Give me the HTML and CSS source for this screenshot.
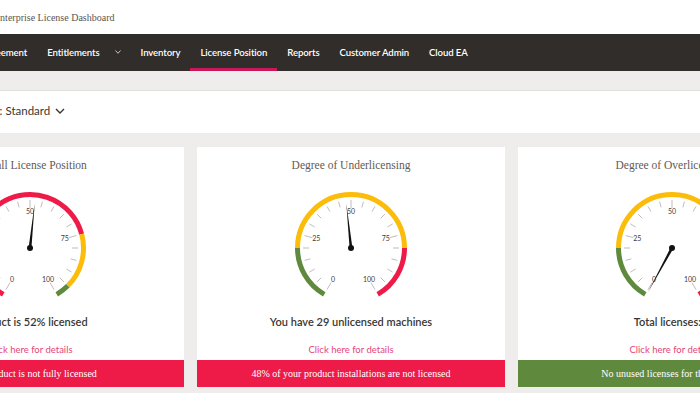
FILE: index.html
```html
<!DOCTYPE html>
<html lang="en">
<head>
  <meta charset="UTF-8" />
  <meta name="viewport" content="width=device-width, initial-scale=1.0" />
  <title>Enterprise License Dashboard</title>
  <link rel="stylesheet" href="styles.css">
</head>
<body>
  <div class="page">
    <header class="top">
      <span class="app-title">Enterprise License Dashboard</span>
    </header>

    <nav class="nav">
      <a>Agreement</a>
      <a>Entitlements
        <svg class="caret" width="6" height="4" viewBox="0 0 6 4"><polyline points="0.5,0.5 3,3.3 5.5,0.5" /></svg>
      </a>
      <a>Inventory</a>
      <a class="active">License Position</a>
      <a>Reports</a>
      <a>Customer Admin</a>
      <a>Cloud EA</a>
    </nav>

    <div class="filter">
      <span>Edition: Standard</span>
      <svg class="chevron" width="10" height="6" viewBox="0 0 10 6"><polyline points="1,1 5,5 9,1" /></svg>
    </div>

    <div class="cards">
      <div class="card">
        <h2>Overall License Position</h2>
        <svg class="gauge" viewBox="0 0 130 115" data-value="52" data-len="45" data-bands="0:75:red,75:95:yellow,95:100:green"></svg>
        <p class="summary">Product is 52% licensed</p>
        <a class="details">Click here for details</a>
        <div class="status bad">Your product is not fully licensed</div>
      </div>

      <div class="card">
        <h2>Degree of Underlicensing</h2>
        <svg class="gauge" viewBox="0 0 130 115" data-value="48" data-len="45" data-bands="0:20:green,20:80:yellow,80:100:red"></svg>
        <p class="summary">You have 29 unlicensed machines</p>
        <a class="details">Click here for details</a>
        <div class="status bad">48% of your product installations are not licensed</div>
      </div>

      <div class="card">
        <h2>Degree of Overlicensing</h2>
        <svg class="gauge" viewBox="0 0 130 115" data-value="-0.5" data-len="51" data-bands="0:20:green,20:80:yellow,80:100:red"></svg>
        <p class="summary">Total licenses: 0</p>
        <a class="details">Click here for details</a>
        <div class="status good">No unused licenses for this product</div>
      </div>
    </div>
  </div>

  <script>
    const NS = 'http://www.w3.org/2000/svg';
    const colors = { red: '#ee1a48', yellow: '#fcbc0a', green: '#5f8a3d' };
    const cx = 65, cy = 63;

    function pt(v, r) {
      const a = (-150 + v * 3) * Math.PI / 180;
      return [cx + r * Math.sin(a), cy - r * Math.cos(a)];
    }

    function el(tag, attrs) {
      const node = document.createElementNS(NS, tag);
      for (const k in attrs) node.setAttribute(k, attrs[k]);
      return node;
    }

    document.querySelectorAll('.gauge').forEach(svg => {
      // coloured bands round the dial
      svg.dataset.bands.split(',').forEach(band => {
        const [from, to, c] = band.split(':');
        const [x0, y0] = pt(+from, 53.5);
        const [x1, y1] = pt(+to, 53.5);
        const large = (to - from) * 3 > 180 ? 1 : 0;
        svg.appendChild(el('path', {
          d: `M${x0} ${y0} A53.5 53.5 0 ${large} 1 ${x1} ${y1}`,
          stroke: colors[c], 'stroke-width': 5, fill: 'none'
        }));
      });

      // ticks every 5
      for (let v = 0; v <= 100; v += 5) {
        const major = v % 25 === 0;
        const [x0, y0] = pt(v, major ? 40 : 42);
        const [x1, y1] = pt(v, 48);
        svg.appendChild(el('line', { x1: x0, y1: y0, x2: x1, y2: y1, stroke: '#b9b6b3', 'stroke-width': 0.9 }));
      }

      [0, 25, 50, 75, 100].forEach(v => {
        const [x, y] = pt(v, 36);
        const t = el('text', { x: x, y: y + 2.4, 'text-anchor': 'middle', class: 'tick-label' });
        t.textContent = v;
        svg.appendChild(t);
      });

      // needle
      const value = +svg.dataset.value;
      const len = +svg.dataset.len;
      const a = (-150 + value * 3) * Math.PI / 180;
      const [tx, ty] = pt(value, len);
      const w = 1.4;
      svg.appendChild(el('polygon', {
        points: `${cx + w * Math.cos(a)},${cy + w * Math.sin(a)} ${tx},${ty} ${cx - w * Math.cos(a)},${cy - w * Math.sin(a)}`,
        fill: '#111'
      }));
      svg.appendChild(el('circle', { cx: cx, cy: cy, r: 3, fill: '#111' }));
    });
  </script>
</body>
</html>
```

FILE: styles.css
```css
* {
  box-sizing: border-box;
  margin: 0;
  padding: 0;
}

body {
  background: #efedeb;
  font-family: 'Lato', sans-serif;
  color: #312d2a;
  overflow: hidden;
}

.page {
  width: 976px;
  margin-left: -137px;
}

.top {
  height: 34px;
  background: #fff;
  display: flex;
  align-items: center;
  padding-left: 131px;
}

.app-title {
  font-family: 'Liberation Serif', serif;
  font-size: 10px;
  color: #5a5550;
}

.nav {
  height: 37px;
  background: #312d2a;
  display: flex;
  padding-left: 108px;
}

.nav a {
  display: flex;
  align-items: center;
  gap: 15px;
  padding: 0 10px;
  color: #fff;
  font-weight: 600;
  font-size: 9.6px;
  letter-spacing: -0.1px;
  border-top: 2px solid transparent;
  border-bottom: 3px solid transparent;
}

.nav a.active {
  border-bottom-color: #c9175a;
}

.caret polyline {
  fill: none;
  stroke: #d8d5d2;
  stroke-width: 0.9;
}

.filter {
  margin-top: 19px;
  height: 43px;
  background: #fff;
  border-top: 1px solid #e2e0dd;
  display: flex;
  align-items: center;
  gap: 5px;
  padding-left: 101px;
  padding-bottom: 3px;
  font-size: 11.5px;
  color: #3a3631;
}

.chevron polyline {
  fill: none;
  stroke: #3a3631;
  stroke-width: 1.4;
}

.cards {
  display: flex;
  gap: 13px;
  padding: 14px 13px;
}

.card {
  width: 308px;
  height: 240px;
  background: #fff;
  display: flex;
  flex-direction: column;
  align-items: center;
  padding-top: 11px;
}

.card h2 {
  font-family: 'Liberation Serif', serif;
  font-weight: normal;
  font-size: 11.5px;
  line-height: 14px;
  color: #5f5a55;
}

.gauge {
  margin-top: 13px;
  width: 130px;
  height: 115px;
}

.tick-label {
  font-family: 'Lato', sans-serif;
  font-size: 7px;
  fill: #3f3b38;
}

.summary {
  margin-top: 14px;
  font-size: 11px;
  font-weight: 600;
  line-height: 16px;
  color: #3a3631;
}

.details {
  margin-top: 14px;
  font-size: 9.5px;
  line-height: 12px;
  color: #e4467b;
}

.status {
  margin-top: auto;
  width: 100%;
  height: 27px;
  display: flex;
  align-items: center;
  justify-content: center;
  font-family: 'Liberation Serif', serif;
  font-size: 10px;
  color: #fff;
}

.status.bad {
  background: #ee1a48;
}

.status.good {
  background: #5f8a3d;
}
```
